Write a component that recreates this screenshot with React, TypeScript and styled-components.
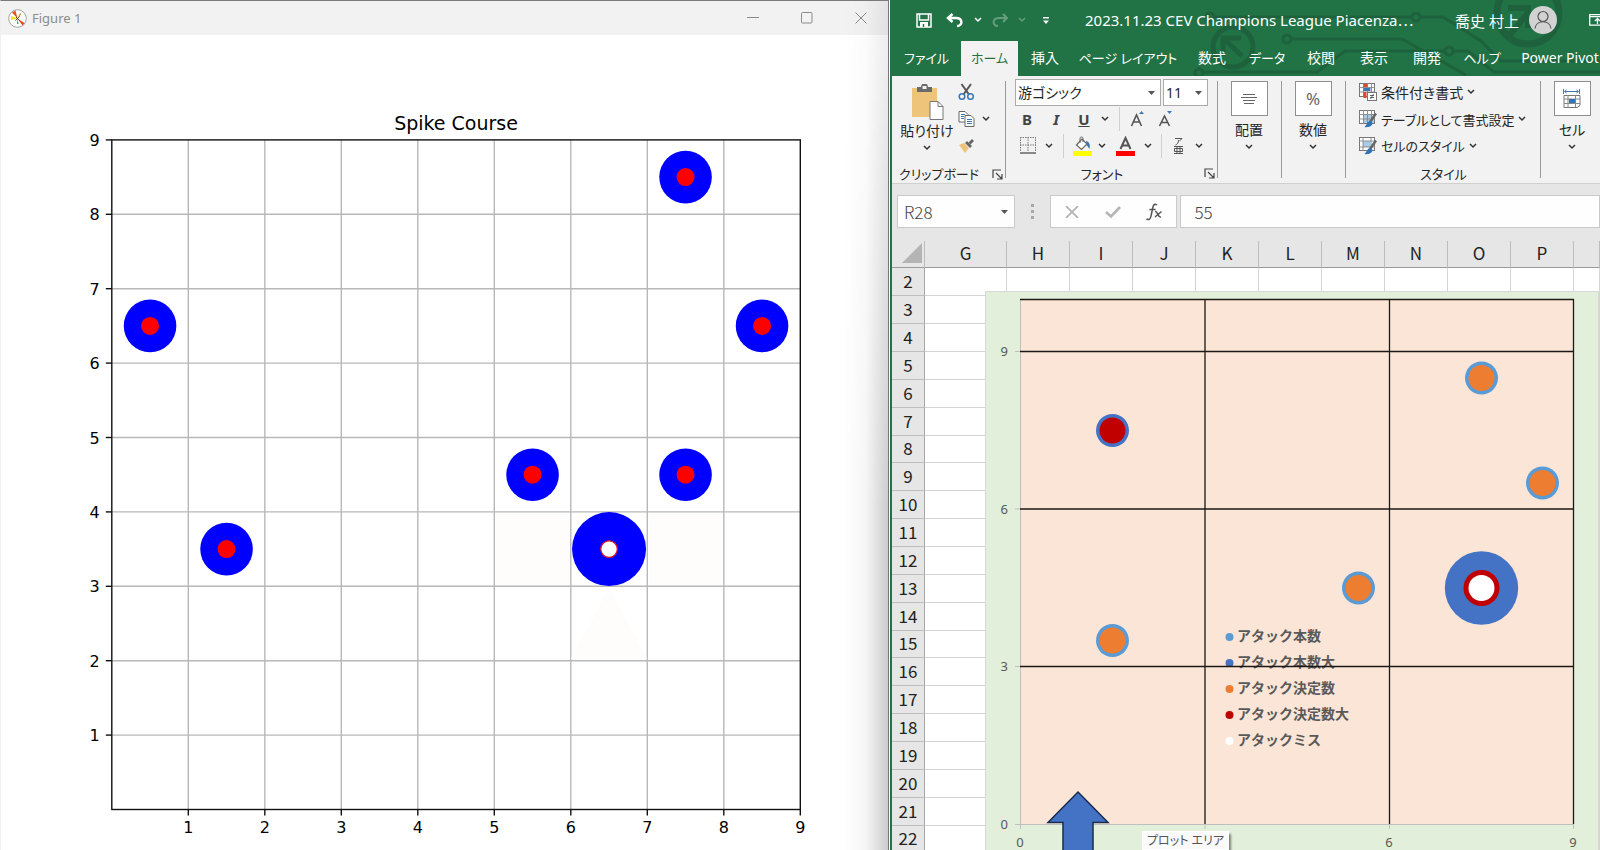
import React from "react";
import styled, { createGlobalStyle } from "styled-components";

const uiFont = `"Noto Sans", "Noto Sans CJK JP", sans-serif`;
const jpFont = `"Noto Sans CJK JP", "Noto Sans", sans-serif`;

const GlobalStyle = createGlobalStyle`
  * { box-sizing: border-box; }
  body { margin: 0; background: #fff; font-family: ${uiFont}; overflow: hidden; }
  button, input, select { font: inherit; color: inherit; margin: 0; padding: 0; border: 0; background: none; }
  svg { display: block; }
`;

const Desktop = styled.main`
  display: grid;
  grid-template-columns: minmax(0, 889fr) minmax(0, 711fr);
  height: 100vh;
  overflow: hidden;
`;

/* ---------- Figure window ---------- */

const FigureWindow = styled.section`
  position: relative;
  display: flex;
  flex-direction: column;
  min-height: 0;
  border-top: 1px solid #7b797b;
  border-left: 1px solid #f0f0f0;
  border-right: 1px solid #777;
  background: #fff;
`;

const EdgeShade = styled.div`
  position: absolute;
  top: 0;
  right: 0;
  bottom: 0;
  width: 44px;
  pointer-events: none;
  background: linear-gradient(to right, rgba(0, 0, 0, 0), rgba(0, 0, 0, 0.04) 50%, rgba(0, 0, 0, 0.2));
  mask-image: linear-gradient(to bottom, rgba(0, 0, 0, 0.3), #000 60%);
`;

const FigureTitleBar = styled.header`
  display: flex;
  align-items: center;
  flex: 0 0 34px;
  padding-left: 7px;
  background: #f2f2f2;
  color: #8c8c8c;
  font-size: 14px;
`;

const FigureName = styled.h1`
  flex: 1;
  margin: 0 0 0 5px;
  font-size: 13px;
  font-weight: 400;
`;

const WindowButton = styled.button`
  display: grid;
  place-items: center;
  width: 54px;
  height: 34px;
  color: #8a8a8a;
`;

const FigureBody = styled.div`
  flex: 1;
  min-height: 0;
  svg { width: 100%; height: 100%; }
`;

const PX = (v: number) => 110.8 + v * 76.5;
const PY = (v: number) => 774.5 - v * 74.4;
const nine = [1, 2, 3, 4, 5, 6, 7, 8, 9];
const spikes = [[7.5, 8.5], [0.5, 6.5], [8.5, 6.5], [5.5, 4.5], [7.5, 4.5], [1.5, 3.5]];

function SpikePlot() {
  return (
    <svg viewBox="0 0 887 815" preserveAspectRatio="xMinYMin meet" role="img" aria-label="Spike Course">
      <g stroke="#b8b8b8" strokeWidth="1.4">
        {nine.slice(0, 8).map((v) => (
          <g key={v}>
            <line x1={PX(v)} x2={PX(v)} y1={PY(9)} y2={PY(0)} />
            <line x1={PX(0)} x2={PX(9)} y1={PY(v)} y2={PY(v)} />
          </g>
        ))}
      </g>
      <g fill="#fefdfc">
        <rect x={PX(5) + 2} y={PY(4) + 2} width="73" height="71" />
        <rect x={PX(7) + 2} y={PY(4) + 2} width="73" height="71" />
        <path d={`M${PX(6.5)} ${PY(3) + 2}L${PX(7)} ${PY(2) - 2}H${PX(6)}z`} />
      </g>
      <g stroke="#111" strokeWidth="1.4" fill="none">
        <rect x={PX(0)} y={PY(9)} width={76.5 * 9} height={74.4 * 9} />
        {nine.map((v) => (
          <g key={v}>
            <line x1={PX(v)} x2={PX(v)} y1={PY(0)} y2={PY(0) + 6} />
            <line x1={PX(0) - 6} x2={PX(0)} y1={PY(v)} y2={PY(v)} />
          </g>
        ))}
      </g>
      {spikes.map(([x, y]) => (
        <g key={`${x}-${y}`}>
          <circle cx={PX(x)} cy={PY(y)} r="26.3" fill="#00f" />
          <circle cx={PX(x)} cy={PY(y)} r="9" fill="#f00" />
        </g>
      ))}
      <circle cx={PX(6.5)} cy={PY(3.5)} r="37" fill="#00f" />
      <circle cx={PX(6.5)} cy={PY(3.5)} r="8.3" fill="#fff" stroke="#e01020" strokeWidth="1.3" />
      <g fontFamily="DejaVu Sans, sans-serif" fontSize="16" fill="#000">
        {nine.map((v) => (
          <g key={v}>
            <text x={PX(v)} y={PY(0) + 23} textAnchor="middle">{v}</text>
            <text x={PX(0) - 12} y={PY(v) + 6} textAnchor="end">{v}</text>
          </g>
        ))}
        <text x={PX(4.5)} y="95" fontSize="19" textAnchor="middle">Spike Course</text>
      </g>
    </svg>
  );
}

/* ---------- Spreadsheet window ---------- */

const ExcelWindow = styled.section`
  display: flex;
  flex-direction: column;
  min-width: 0;
  min-height: 0;
  overflow: hidden;
  border-left: 2px solid #217346;
  margin-left: 1px;
  background: #e6e6e6;
`;

const GreenHeader = styled.header`
  position: relative;
  flex: 0 0 76px;
  background: #217346;
  color: #fff;
  overflow: hidden;
`;

const Circuit = styled.svg`
  position: absolute;
  top: 0;
  left: 288px;
`;

const TitleRow = styled.div`
  position: relative;
  display: flex;
  align-items: center;
  height: 40px;
  padding-left: 22px;
  white-space: nowrap;
`;

const QuickButton = styled.button<{ $w: number; $dim?: boolean }>`
  display: grid;
  place-items: center;
  flex: 0 0 ${(p) => p.$w}px;
  height: 32px;
  opacity: ${(p) => (p.$dim ? 0.3 : 1)};
`;

const BookTitle = styled.h2`
  flex: 0 0 370px;
  margin: 0 0 0 19px;
  font-size: 15px;
  line-height: 24px;
  font-weight: 400;
  span { font-family: ${jpFont}; line-height: 1; }
`;

const UserButton = styled.button`
  display: flex;
  align-items: center;
  gap: 10px;
  font-size: 15px;
`;

const RibbonToggle = styled.button`
  margin-left: 32px;
`;

const Tabs = styled.nav`
  position: relative;
  display: flex;
  height: 36px;
  padding-top: 1px;
`;

const Tab = styled.button<{ $w: number; $kana?: boolean; $active?: boolean }>`
  flex: 0 0 ${(p) => p.$w}px;
  height: 35px;
  padding-bottom: 3px;
  font-size: ${(p) => (p.$kana ? 13 : 14)}px;
  font-feature-settings: "palt";
  white-space: nowrap;
  color: ${(p) => (p.$active ? "#217346" : "#fff")};
  background: ${(p) => (p.$active ? "#f2f2f2" : "transparent")};
`;

const Ribbon = styled.div`
  display: flex;
  flex: 0 0 108px;
  background: #f2f2f2;
  border-bottom: 1px solid #d0d0d0;
  color: #262626;
  font-size: 14px;
  overflow: hidden;
`;

const Group = styled.section<{ $w: number; $pad?: number }>`
  position: relative;
  display: flex;
  flex-direction: column;
  flex: 0 0 ${(p) => p.$w}px;
  padding: 3px 0 0 ${(p) => p.$pad ?? 0}px;
  &::after {
    content: "";
    position: absolute;
    right: 0;
    top: 5px;
    bottom: 5px;
    width: 1px;
    background: #9a9a9a;
  }
`;

const GroupRow = styled.div`
  display: flex;
  align-items: center;
  height: 27px;
`;

const GroupFooter = styled.div<{ $shift?: number }>`
  position: relative;
  display: flex;
  align-items: center;
  justify-content: center;
  height: 20px;
  margin-top: 4px;
  padding-right: ${(p) => p.$shift ?? 0}px;
  font-size: 13px;
  font-feature-settings: "palt";
`;

const Launcher = styled.button`
  position: absolute;
  right: 3px;
  top: 5px;
`;

const Tool = styled.button<{ $w: number }>`
  display: grid;
  place-items: center;
  flex: 0 0 ${(p) => p.$w}px;
  height: 26px;
  color: #444;
  font-size: 15px;
`;

const ThinRule = styled.i<{ $gap: number }>`
  width: 1px;
  height: 24px;
  margin: 0 ${(p) => p.$gap}px;
  background: #cfcfcf;
`;

const ClipboardArea = styled.div`
  display: grid;
  grid-template-columns: 54px 24px 16px;
  height: 81px;
  padding-left: 8px;
`;

const PasteButton = styled.button`
  display: flex;
  flex-direction: column;
  align-items: center;
  padding-top: 5px;
  white-space: nowrap;
  font-feature-settings: "palt";
  line-height: 20px;
  svg:last-child { margin-top: 4px; }
`;

const IconColumn = styled.div`
  display: grid;
  grid-template-rows: repeat(3, 27px);
`;

const SelectBox = styled.label<{ $w: number }>`
  display: flex;
  align-items: center;
  width: ${(p) => p.$w}px;
  height: 27px;
  margin-right: 2px;
  padding: 0 5px 0 2px;
  border: 1px solid #ababab;
  background: #fff;
  select { flex: 1; min-width: 0; appearance: none; outline: 0; font-feature-settings: "palt"; }
`;

const LargeButton = styled.button`
  display: flex;
  flex-direction: column;
  align-items: center;
  width: 38px;
  padding-top: 2px;
  font-feature-settings: "palt";
  line-height: 28px;
`;

const LargeIcon = styled.span`
  display: grid;
  place-items: center;
  width: 37px;
  height: 35px;
  border: 1px solid #8f8f8f;
  background: #fff;
  color: #666;
  font-size: 17px;
`;

const StyleButton = styled.button<{ $kana?: boolean }>`
  display: flex;
  align-items: center;
  gap: 4px;
  height: 27px;
  white-space: nowrap;
  font-size: ${(p) => (p.$kana ? 13 : 14)}px;
  font-feature-settings: "palt";
`;

const FormulaRow = styled.div`
  display: flex;
  align-items: center;
  flex: 0 0 57px;
  padding: 0 0 2px 5px;
  color: #444;
  font-family: ${jpFont};
  font-weight: 300;
  font-size: 17px;
`;

const FormulaBox = styled.div<{ $w?: number }>`
  display: flex;
  align-items: center;
  flex: ${(p) => (p.$w ? `0 0 ${p.$w}px` : "1")};
  min-width: 0;
  height: 33px;
  border: 1px solid #c9c9c9;
  background: #fefefe;
  input { flex: 1; width: 0; min-width: 0; height: 29px; outline: 0; }
`;

const NameInput = styled.input`
  padding-left: 6px;
`;

const FormulaInput = styled.input`
  padding-left: 13px;
`;

const DotsGrip = styled.span`
  display: grid;
  gap: 3px;
  margin: 0 16px;
  i { width: 3px; height: 3px; background: #a8a8a8; }
`;

const SheetArea = styled.div`
  position: relative;
  flex: 1;
  min-height: 0;
  overflow: hidden;
  background: #fff;
`;

const Sheet = styled.table`
  width: 100%;
  border-collapse: separate;
  border-spacing: 0;
  table-layout: fixed;
  font-family: ${jpFont};
  color: #222;
`;

const ColHead = styled.th`
  height: 27px;
  padding: 0 0 2px;
  border-bottom: 1px solid #9b9b9b;
  border-right: 1px solid #bdbdbd;
  background: #e6e6e6;
  font-size: 17px;
  line-height: 24px;
  font-weight: 400;
`;

const RowHead = styled.th`
  padding: 0 0 2px;
  border-right: 1px solid #a8a8a8;
  border-bottom: 1px solid #bdbdbd;
  background: #e6e6e6;
  font-size: 17px;
  line-height: 24px;
  font-weight: 400;
`;

const SheetRow = styled.tr`
  height: 28px;
  &:nth-child(7n) { height: 27px; }
`;

const Cell = styled.td`
  padding: 0;
  border-right: 1px solid #d4d4d4;
  border-bottom: 1px solid #d4d4d4;
`;

const ChartObject = styled.div`
  position: absolute;
  left: 93px;
  top: 50px;
`;

const Tooltip = styled.div`
  position: absolute;
  left: 250px;
  top: 590px;
  padding: 0 4px;
  border: 1px solid #fff;
  background: #fafafa;
  box-shadow: 2px 3px 2px rgba(0, 0, 0, 0.45);
  color: #555;
  font-size: 12px;
  line-height: 17px;
  white-space: nowrap;
  font-feature-settings: "palt";
`;

const Chevron = ({ color = "#333" }: { color?: string }) => (
  <svg width="8" height="6" viewBox="0 0 8 6" fill="none" stroke={color} strokeWidth="1.5"><path d="M1 1l3 3 3-3" /></svg>
);
const Arrow = () => (
  <svg width="7" height="4" viewBox="0 0 7 4" fill="#555"><path d="M0 0h7L3.500 4z" /></svg>
);
const LaunchIcon = () => (
  <svg width="11" height="11" viewBox="0 0 11 11" fill="none" stroke="#444" strokeWidth="1.2">
    <path d="M1 9V1h8M4 4l5.500 5.500M10 5v5H5" />
  </svg>
);

const FigureIcon = () => (
  <svg width="19" height="19" viewBox="0 0 19 19">
    <circle cx="9.500" cy="9.500" r="8.800" fill="#fff" stroke="#999" strokeWidth=".9" />
    <path d="M9.500 9.500L4 3.500 7.500 1.500z" fill="#e8501e" />
    <path d="M9.500 9.500L14.500 16.500l2-2.500z" fill="#e2481e" />
    <path d="M9.500 9.500L3 7 3 11z" fill="#f2e21c" />
    <path d="M9.500 9.500L12 4l1.500 1z" fill="#c99a2a" />
    <path d="M9.500 9.500L9 15h1.500z" fill="#3f9f55" />
    <path d="M8 8l3.500 3.500M11.500 7.500l-4 4" stroke="#333" strokeWidth=".9" />
  </svg>
);

const PasteIcon = () => (
  <svg width="33" height="37" viewBox="0 0 33 37">
    <rect x="1" y="4" width="25" height="29" fill="#eec47a" />
    <path d="M6 3h4a3.500 3.500 0 0 1 7 0h4v5H6z" fill="#6b6b6b" />
    <rect x="11.500" y="2" width="4" height="3" fill="#f2f2f2" />
    <path d="M19 17.500h8l5 5V35.500H19z" fill="#fff" stroke="#777" />
    <path d="M27 17.500v5h5" fill="none" stroke="#777" />
  </svg>
);
const CutIcon = () => (
  <svg width="17" height="18" viewBox="0 0 17 18" fill="none">
    <path d="M3.500 1L11 11.500M13 1L5.500 11.500" stroke="#555" strokeWidth="2" />
    <circle cx="4" cy="13.500" r="2.800" stroke="#3c78b4" strokeWidth="1.500" />
    <circle cx="12.500" cy="13.500" r="2.800" stroke="#3c78b4" strokeWidth="1.500" />
  </svg>
);
const CopyIcon = () => (
  <svg width="17" height="18" viewBox="0 0 17 18" fill="#fff" stroke="#666">
    <path d="M1 1.500h6l3 3V12H1z" />
    <path d="M7 5.500h6l3 3V16.500H7z" />
    <path d="M3 4.500h4M3 6.500h3M3 8.500h3M9 9.500h5M9 11.500h5M9 13.500h5" stroke="#3c78b4" />
  </svg>
);
const BrushIcon = () => (
  <svg width="17" height="16" viewBox="0 0 17 16">
    <path d="M1 7l5-2 5 5-4 5z" fill="#eec47a" />
    <path d="M7 5l2-2 5 5-2 2z" fill="#666" />
    <path d="M10.500 4.500L14 1l2 2-3.500 3.500z" fill="#666" />
  </svg>
);
const BordersIcon = () => (
  <svg width="16" height="17" viewBox="0 0 16 17" fill="none" stroke="#777">
    <path d="M.5 0v15M15.500 0v15M8 0v15M0 .5h16M0 8h16" strokeDasharray="1.500 1" />
    <path d="M0 16h16" stroke="#666" strokeWidth="1.500" />
  </svg>
);
const FillIcon = () => (
  <svg width="19" height="20" viewBox="0 0 19 20" fill="none">
    <path d="M3.500 9L9 3l5 5-5.500 5.500z" fill="#fff" stroke="#666" strokeWidth="1.200" />
    <path d="M7 7V2.500a1.500 1.500 0 0 1 3 0V6" stroke="#666" />
    <path d="M13 5c3 .5 4.500 3 3.500 8l-3-4z" fill="#3c78b4" />
    <rect y="15" width="19" height="5" fill="#ff0" />
  </svg>
);
const GridIcon = ({ kind }: { kind: "cond" | "table" | "cell" }) => (
  <svg width="18" height="18" viewBox="0 0 18 18" fill="none">
    <rect x=".5" y=".5" width="15" height="13" fill="#fff" stroke="#777" />
    {kind === "table" && <rect x="5" y="4" width="10" height="9" fill="#a9cbe6" />}
    {kind === "cell" && <rect x="4" y="4" width="9" height="6" fill="#a9cbe6" />}
    <path d={kind === "cell" ? "M4 0v14M12 0v4M0 4h16M0 10h16" : "M4.500 0v14M8.500 0v14M12.500 0v14M0 4.500h16M0 9h16"} stroke="#888" strokeWidth=".9" />
    {kind === "cond" ? (
      <>
        <path d="M4.500 1h4v3h-4zM4.500 9h3v6h-3z" fill="#e04a2b" />
        <path d="M4.500 5h7v3h-7z" fill="#3c78b4" />
        <rect x="8.500" y="9.500" width="9" height="8" fill="#fff" stroke="#777" />
        <path d="M11 12.500h4M11 14.500h4M14.500 11l-3 5" stroke="#444" strokeWidth=".8" />
      </>
    ) : (
      <>
        <path d="M17 3.500L11 12" stroke="#666" strokeWidth="2.500" />
        <path d="M11.500 11c-3 0-3 3-6 6 4 .8 8-1 8-4z" fill="#2f74b8" />
      </>
    )}
  </svg>
);
const CellsIcon = () => (
  <svg width="18" height="20" viewBox="0 0 18 20" fill="none">
    <path d="M2 2.500h13M3.500 1L1.500 2.500l2 1.500M13.500 1l2 1.500-2 1.500M.5 0v5M16.500 0v5" stroke="#3c78b4" />
    <path d="M1 6.500h16v10l-3 2H1z" fill="#fff" stroke="#777" />
    <path d="M5 6v12M12.500 6v12M1 10h16M1 14.500h16" stroke="#888" />
    <rect x="6" y="10" width="6" height="4" fill="#2f74b8" />
  </svg>
);

const CircuitArt = () => (
  <Circuit width="426" height="76" viewBox="0 0 426 76" fill="none" stroke="#1d623d" strokeWidth="3" aria-hidden="true">
    <circle cx="53" cy="47" r="20" strokeWidth="5" />
    <path d="M62 56L45 40M43 56V38h18" strokeWidth="5" />
    <circle cx="348" cy="13" r="31" strokeWidth="7" />
    <path d="M330 35L350 10M328 8h20v20" strokeWidth="6" />
    <circle cx="30" cy="17" r="4" /><path d="M34 17H232" />
    <circle cx="236" cy="17" r="4" /><path d="M240 17h23l38 24h0l20 20h105" />
    <circle cx="107" cy="39" r="4" /><path d="M111 39h111l64 36" />
    <circle cx="269" cy="51" r="4" /><path d="M265 51H165l-28 21H23" />
    <circle cx="19" cy="73" r="4" /><path d="M273 51h15l26 21h112" />
  </Circuit>
);

const columns = ["G", "H", "I", "J", "K", "L", "M", "N", "O", "P", ""];
const rows = Array.from({ length: 21 }, (_, i) => i + 2);

const tabs: { name: string; w: number; kana?: boolean }[] = [
  { name: "ファイル", w: 69, kana: true },
  { name: "ホーム", w: 57, kana: true },
  { name: "挿入", w: 54 },
  { name: "ページ レイアウト", w: 112, kana: true },
  { name: "数式", w: 56 },
  { name: "データ", w: 54, kana: true },
  { name: "校閲", w: 54 },
  { name: "表示", w: 52 },
  { name: "開発", w: 54 },
  { name: "ヘルプ", w: 56, kana: true },
  { name: "Power Pivot", w: 100 },
];

const targets = [
  [127.5, 139.5, "#4472c4", "#c00000"], [496.5, 87, "#5b9bd5", "#ed7d31"], [557.5, 192, "#5b9bd5", "#ed7d31"],
  [373.5, 297, "#5b9bd5", "#ed7d31"], [127.5, 349.5, "#5b9bd5", "#ed7d31"],
] as [number, number, string, string][];

const legend = [
  ["アタック本数", "#5b9bd5"], ["アタック本数大", "#4472c4"], ["アタック決定数", "#ed7d31"],
  ["アタック決定数大", "#c00000"], ["アタックミス", "#ffffff"],
];

function AttackChart() {
  return (
    <svg width="614" height="570" viewBox="0 0 614 570" role="img" aria-label="アタック">
      <rect x=".5" y=".5" width="613" height="580" fill="#e2efda" stroke="#d9d9d9" />
      <rect x="35" y="8" width="554" height="525.500" fill="#fbe5d6" />
      <path d="M35.500 8V538M30 60.500h5M30 218h5M30 375.500h5M30 533.500H589M220 533v5M404.500 533v5M588.500 533v5" stroke="#bfbfbf" fill="none" />
      <g fontSize="14" fontWeight="700" fill="#595959" fontFamily={jpFont}>
        {legend.map(([name, color], i) => (
          <g key={name}>
            <circle cx="244.500" cy={346 + i * 26} r="4" fill={color} />
            <text x="252" y={350 + i * 26}>{name}</text>
          </g>
        ))}
      </g>
      <path d="M35 8.500H589M35 60.500H589M35 218H589M35 375.500H589M220 8V533M404.500 8V533M588.500 8V533" stroke="#1c1814" strokeWidth="1.300" fill="none" />
      {targets.map(([x, y, ring, fill]) => (
        <g key={`${x}-${y}`}>
          <circle cx={x} cy={y} r="16.500" fill={ring} />
          <circle cx={x} cy={y} r="13" fill={fill} />
        </g>
      ))}
      <circle cx="496.500" cy="297" r="36.700" fill="#4472c4" />
      <circle cx="496.500" cy="297" r="18" fill="#c00000" />
      <circle cx="496.500" cy="297" r="13" fill="#fff" />
      <path d="M93 501l30 30.500h-15V600H78V531.500H63z" fill="#4472c4" stroke="#172c51" strokeWidth="1.500" />
      <g fontSize="13" fill="#595959" fontFamily={uiFont}>
        <text x="23" y="65" textAnchor="end">9</text>
        <text x="23" y="223" textAnchor="end">6</text>
        <text x="23" y="380" textAnchor="end">3</text>
        <text x="23" y="538" textAnchor="end">0</text>
        <text x="35" y="556" textAnchor="middle">0</text>
        <text x="404" y="556" textAnchor="middle">6</text>
        <text x="588" y="556" textAnchor="middle">9</text>
      </g>
    </svg>
  );
}

export default function App() {
  return (
    <>
      <GlobalStyle />
      <Desktop>
        <FigureWindow>
          <FigureTitleBar>
            <FigureIcon />
            <FigureName>Figure 1</FigureName>
            <WindowButton aria-label="Minimize">
              <svg width="12" height="12" viewBox="0 0 12 12" stroke="currentColor"><path d="M0 5.500h12" /></svg>
            </WindowButton>
            <WindowButton aria-label="Maximize">
              <svg width="12" height="12" viewBox="0 0 12 12" fill="none" stroke="currentColor"><rect x=".5" y=".5" width="10.500" height="10.500" rx="1" /></svg>
            </WindowButton>
            <WindowButton aria-label="Close">
              <svg width="12" height="12" viewBox="0 0 12 12" stroke="currentColor"><path d="M.5.5l11 11M11.500.5l-11 11" /></svg>
            </WindowButton>
          </FigureTitleBar>
          <FigureBody><SpikePlot /></FigureBody>
          <EdgeShade />
        </FigureWindow>

        <ExcelWindow>
          <GreenHeader>
            <CircuitArt />
            <TitleRow>
              <QuickButton $w={20} aria-label="上書き保存">
                <svg width="16" height="15" viewBox="0 0 16 15" fill="none" stroke="#fff" strokeWidth="1.500">
                  <path d="M1 1h14v13H1zM3.500 1v6h9V1" /><path d="M4 9h8v5H4z" fill="#fff" stroke="none" /><path d="M7.500 11v3" stroke="#217346" />
                </svg>
              </QuickButton>
              <QuickButton $w={40} aria-label="元に戻す">
                <svg width="17" height="15" viewBox="0 0 17 15" fill="none" stroke="#fff" strokeWidth="2.500">
                  <path d="M6.500 1L2 5l4.500 4M2 5h8c7 0 7 8 1 8" />
                </svg>
              </QuickButton>
              <QuickButton $w={8} aria-label="元に戻す一覧"><Chevron color="#fff" /></QuickButton>
              <QuickButton $w={36} $dim aria-label="やり直し">
                <svg width="17" height="15" viewBox="0 0 17 15" fill="none" stroke="#fff" strokeWidth="2">
                  <path d="M11 1l4 4-4 4M15 5H7C0 5 0 13 6 13" />
                </svg>
              </QuickButton>
              <QuickButton $w={8} $dim aria-label="やり直し一覧"><Chevron color="#fff" /></QuickButton>
              <QuickButton $w={40} aria-label="クイック アクセスのカスタマイズ">
                <svg width="6" height="7" viewBox="0 0 6 7" fill="#fff"><path d="M0 0h6v1.500H0zM0 3.500h6L3 7z" /></svg>
              </QuickButton>
              <BookTitle>2023.11.23 CEV Champions League Piacenza<span>⋯</span></BookTitle>
              <UserButton>
                喬史 村上
                <svg width="28" height="28" viewBox="0 0 28 28" fill="none" stroke="#555" strokeWidth="1.200">
                  <circle cx="14" cy="14" r="14" fill="#d2d2d2" stroke="none" />
                  <circle cx="14" cy="10.500" r="5" /><path d="M6 22.500c1-9 15-9 16 0" />
                </svg>
              </UserButton>
              <RibbonToggle aria-label="リボンの表示オプション">
                <svg width="18" height="12" viewBox="0 0 18 12" fill="none" stroke="#fff" strokeWidth="1.300">
                  <path d="M.7.7h16v10.500H.7zM.7 2.700h16M8.500 10V5M6 7l2.500-2.500L11 7" />
                </svg>
              </RibbonToggle>
            </TitleRow>
            <Tabs>
              {tabs.map((t) => <Tab key={t.name} $w={t.w} $kana={t.kana} $active={t.name === "ホーム"}>{t.name}</Tab>)}
            </Tabs>
          </GreenHeader>

          <Ribbon>
            <Group $w={114}>
              <ClipboardArea>
                <PasteButton><PasteIcon />貼り付け<Chevron /></PasteButton>
                <IconColumn>
                  <Tool $w={24} aria-label="切り取り"><CutIcon /></Tool>
                  <Tool $w={24} aria-label="コピー"><CopyIcon /></Tool>
                  <Tool $w={24} aria-label="書式のコピー"><BrushIcon /></Tool>
                </IconColumn>
                <IconColumn><span /><Tool $w={16} aria-label="コピー一覧"><Chevron /></Tool></IconColumn>
              </ClipboardArea>
              <GroupFooter $shift={20}>クリップボード<Launcher aria-label="クリップボード設定"><LaunchIcon /></Launcher></GroupFooter>
            </Group>

            <Group $w={212} $pad={9}>
              <GroupRow>
                <SelectBox $w={146}><select aria-label="フォント"><option>游ゴシック</option></select><Arrow /></SelectBox>
                <SelectBox $w={45}><select aria-label="フォント サイズ"><option>11</option></select><Arrow /></SelectBox>
              </GroupRow>
              <GroupRow>
                <Tool $w={24}><b>B</b></Tool>
                <Tool $w={34}><b><em>I</em></b></Tool>
                <Tool $w={22}><b><u>U</u></b></Tool>
                <Tool $w={20} aria-label="下線一覧"><Chevron /></Tool>
                <ThinRule $gap={4} />
                <Tool $w={28} aria-label="フォント サイズの拡大">
                  <svg width="16" height="18" viewBox="0 0 16 18" fill="none"><path d="M1.500 16L6.500 5l5 11M3.500 12h6" stroke="#555" strokeWidth="1.600" /><path d="M9 4h5l-2.500-3z" fill="#3c78b4" /></svg>
                </Tool>
                <Tool $w={28} aria-label="フォント サイズの縮小">
                  <svg width="16" height="18" viewBox="0 0 16 18" fill="none"><path d="M1.500 16L6.500 6l5 10M3.500 12.500h6" stroke="#555" strokeWidth="1.600" /><path d="M9 1h5l-2.500 3z" fill="#3c78b4" /></svg>
                </Tool>
              </GroupRow>
              <GroupRow>
                <Tool $w={26} aria-label="罫線"><BordersIcon /></Tool>
                <Tool $w={16} aria-label="罫線一覧"><Chevron /></Tool>
                <ThinRule $gap={6} />
                <Tool $w={24} aria-label="塗りつぶしの色"><FillIcon /></Tool>
                <Tool $w={16} aria-label="塗りつぶし一覧"><Chevron /></Tool>
                <Tool $w={30} aria-label="フォントの色">
                  <svg width="19" height="20" viewBox="0 0 19 20" fill="none"><path d="M4.500 13L9.500 2l5 11M6.500 9.500h6" stroke="#555" strokeWidth="2" /><rect y="15" width="19" height="5" fill="#f00" /></svg>
                </Tool>
                <Tool $w={16} aria-label="フォントの色一覧"><Chevron /></Tool>
                <ThinRule $gap={5} />
                <Tool $w={22} aria-label="ふりがな">
                  <svg width="11" height="18" viewBox="0 0 11 18" fill="none" stroke="#555"><path d="M2 1.500h7L6.500 4M5.500 3c0 3-1 4-3 5M1 9.500h9M1 16.500h9M4 9.500v7M7 9.500v7M1.500 11.500h8v3h-8z" /></svg>
                </Tool>
                <Tool $w={20} aria-label="ふりがな一覧"><Chevron /></Tool>
              </GroupRow>
              <GroupFooter $shift={29}>フォント<Launcher aria-label="フォントの設定"><LaunchIcon /></Launcher></GroupFooter>
            </Group>

            <Group $w={64} $pad={12}>
              <LargeButton>
                <LargeIcon><svg width="16" height="12" viewBox="0 0 16 12" stroke="#666"><path d="M2 1.500h12M0 4.500h16M2 7.500h12M3 10.500h10" /></svg></LargeIcon>
                配置<Chevron />
              </LargeButton>
            </Group>
            <Group $w={64} $pad={12}>
              <LargeButton><LargeIcon>%</LargeIcon>数値<Chevron /></LargeButton>
            </Group>
            <Group $w={195} $pad={13}>
              <StyleButton><GridIcon kind="cond" /><span>条件付き書式</span><Chevron /></StyleButton>
              <StyleButton $kana><GridIcon kind="table" /><span>テーブルとして書式設定</span><Chevron /></StyleButton>
              <StyleButton $kana><GridIcon kind="cell" /><span>セルのスタイル</span><Chevron /></StyleButton>
              <GroupFooter $shift={13}>スタイル</GroupFooter>
            </Group>
            <Group $w={96} $pad={12}>
              <LargeButton><LargeIcon><CellsIcon /></LargeIcon>セル<Chevron /></LargeButton>
            </Group>
          </Ribbon>

          <FormulaRow>
            <FormulaBox $w={118}>
              <NameInput aria-label="名前ボックス" defaultValue="R28" />
              <QuickButton $w={20} aria-label="名前一覧"><Arrow /></QuickButton>
            </FormulaBox>
            <DotsGrip><i /><i /><i /></DotsGrip>
            <FormulaBox $w={127}>
              <QuickButton $w={41} aria-label="キャンセル">
                <svg width="14" height="12" viewBox="0 0 14 12" stroke="#b5b5b5" strokeWidth="1.800"><path d="M1 0l12 12M13 0L1 12" /></svg>
              </QuickButton>
              <QuickButton $w={42} aria-label="入力">
                <svg width="16" height="12" viewBox="0 0 16 12" fill="none" stroke="#b5b5b5" strokeWidth="2.600"><path d="M1 6l5 4.500L15 1" /></svg>
              </QuickButton>
              <QuickButton $w={40} aria-label="関数の挿入">
                <svg width="17" height="18" viewBox="0 0 17 18" fill="none" stroke="#555" strokeWidth="1.500">
                  <path d="M11 2C8-.5 7 3 6.500 6L5 13c-.5 3-2 4.500-4.500 3M3.500 6.500h6" /><path d="M9 8.500c3-1 2.500 6.500 6 5.500M15.500 8.500L9 14" />
                </svg>
              </QuickButton>
            </FormulaBox>
            <span>&thinsp;</span>
            <FormulaBox><FormulaInput aria-label="数式バー" defaultValue="55" /></FormulaBox>
          </FormulaRow>

          <SheetArea>
            <Sheet>
              <colgroup>
                <col width="33" /><col width="82" />
                {columns.slice(1, 10).map((c) => <col key={c} width="63" />)}
                <col />
              </colgroup>
              <thead>
                <tr>
                  <ColHead aria-label="すべて選択">
                    <svg width="30" height="22" viewBox="0 0 30 22"><path d="M30 1v20H10z" fill="#b4b4b4" /></svg>
                  </ColHead>
                  {columns.map((c, i) => <ColHead key={i}>{c}</ColHead>)}
                </tr>
              </thead>
              <tbody>
                {rows.map((r) => (
                  <SheetRow key={r}>
                    <RowHead>{r}</RowHead>
                    {columns.map((c, i) => <Cell key={i} />)}
                  </SheetRow>
                ))}
              </tbody>
            </Sheet>
            <ChartObject><AttackChart /></ChartObject>
            <Tooltip role="tooltip">プロット エリア</Tooltip>
          </SheetArea>
        </ExcelWindow>
      </Desktop>
    </>
  );
}
